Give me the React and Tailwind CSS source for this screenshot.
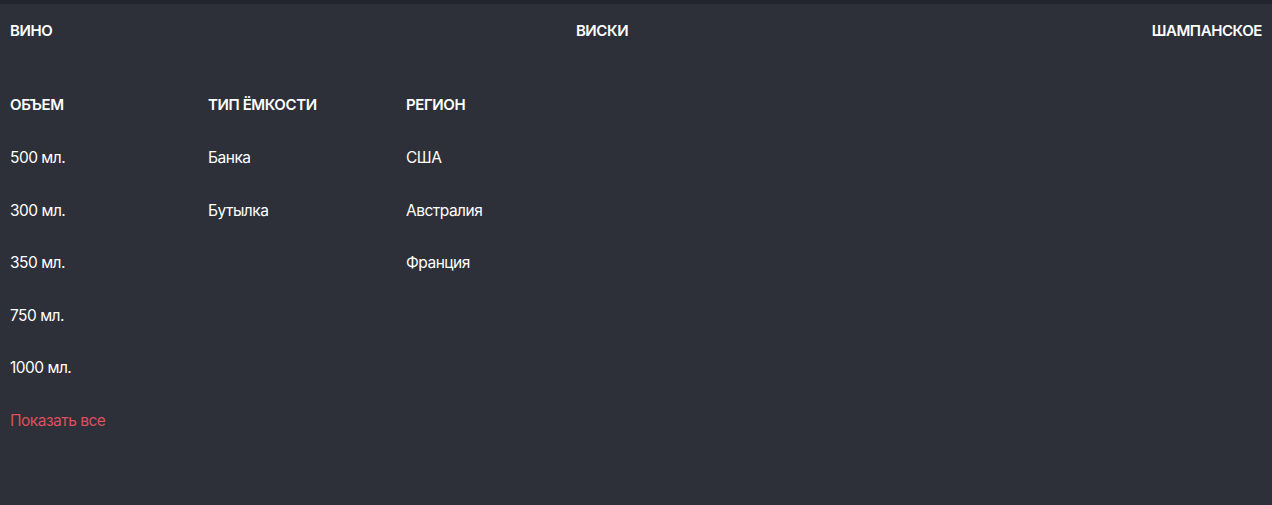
import React from "react";

const CATEGORIES = ["ВИНО", "ВИСКИ", "ШАМПАНСКОЕ"];

const FILTERS = [
  { title: "ОБЪЕМ", items: ["500 мл.", "300 мл.", "350 мл.", "750 мл.", "1000 мл."], more: true },
  { title: "ТИП ЁМКОСТИ", items: ["Банка", "Бутылка"] },
  { title: "РЕГИОН", items: ["США", "Австралия", "Франция"] },
];

export default function App() {
  return (
    <div className="min-h-screen bg-[#2d3039] font-['Inter',sans-serif] text-white">
      <div className="h-[4px] bg-[#22252d]" />

      {/* Categories */}
      <div className="flex h-[52px] items-center justify-between px-[10px] text-[15px] font-semibold tracking-[-0.4px]">
        {CATEGORIES.map((c) => (
          <a key={c} href="#" className="leading-none">
            {c}
          </a>
        ))}
      </div>

      {/* Filter columns */}
      <div className="mt-[23px] flex px-[10px]">
        {FILTERS.map((f) => (
          <div key={f.title} className="flex w-[198px] flex-col">
            <div className="flex h-[52.5px] items-center text-[15px] font-semibold tracking-[-0.4px]">
              {f.title}
            </div>
            {f.items.map((it) => (
              <div key={it} className="flex h-[52.5px] items-center text-[15.5px] tracking-[-0.5px]">
                {it}
              </div>
            ))}
            {f.more && (
              <a href="#" className="flex h-[52.5px] items-center text-[15.5px] tracking-[-0.5px] text-[#dc525c]">
                Показать все
              </a>
            )}
          </div>
        ))}
      </div>
    </div>
  );
}
